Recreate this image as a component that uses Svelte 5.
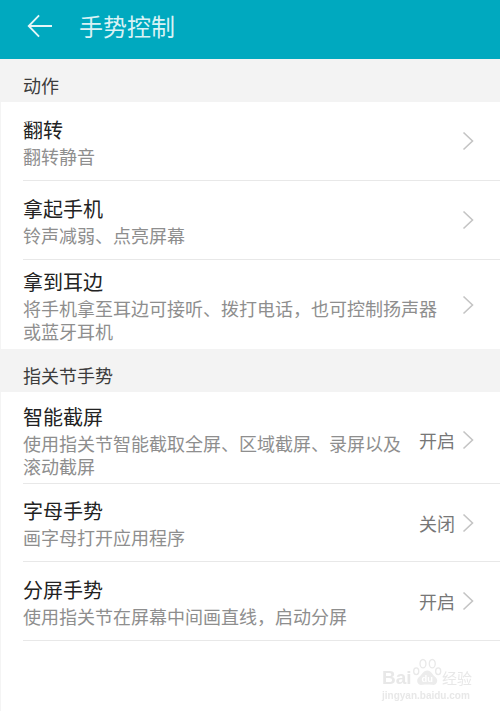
<script lang="ts">
  type Row = { title: string, desc: string, value?: string }

  const sections: { name: string, rows: Row[] }[] = [
    {
      name: '动作',
      rows: [
        { title: '翻转', desc: '翻转静音' },
        { title: '拿起手机', desc: '铃声减弱、点亮屏幕' },
        { title: '拿到耳边', desc: '将手机拿至耳边可接听、拨打电话，也可控制扬声器或蓝牙耳机' },
      ],
    },
    {
      name: '指关节手势',
      rows: [
        { title: '智能截屏', desc: '使用指关节智能截取全屏、区域截屏、录屏以及滚动截屏', value: '开启' },
        { title: '字母手势', desc: '画字母打开应用程序', value: '关闭' },
        { title: '分屏手势', desc: '使用指关节在屏幕中间画直线，启动分屏', value: '开启' },
      ],
    },
  ]
</script>

<div class="page">
  <header>
    <svg class="back" viewBox="0 0 28 26" width="26" height="24" aria-hidden="true">
      <path d="M13 1.5 1.8 13 13 24.5M2 13h25" fill="none" stroke="#e6f6f8" stroke-width="2"/>
    </svg>
    <h1>手势控制</h1>
  </header>

  {#each sections as section}
    <h2>{section.name}</h2>
    <ul class:lined={section.name !== '动作'}>
      {#each section.rows as row}
        <li>
          <div class="text">
            <div class="title">{row.title}</div>
            <div class="desc">{row.desc}</div>
          </div>
          {#if row.value}
            <span class="value">{row.value}</span>
          {/if}
          <svg class="chev" viewBox="0 0 12 20" width="12" height="20" aria-hidden="true">
            <path d="M1.5 1.5 10.5 10l-9 8.5" fill="none" stroke="#c4c4c4" stroke-width="1.6"/>
          </svg>
        </li>
      {/each}
    </ul>
  {/each}

  <div class="mark" aria-hidden="true">
    <div class="logo">
      <span class="bai">Bai</span>
      <svg viewBox="0 0 36 36" width="32" height="32">
        <g fill="none" stroke="#e9e9e9" stroke-width="1.6">
          <ellipse cx="5" cy="16" rx="3" ry="4"/>
          <ellipse cx="13" cy="7" rx="3.5" ry="5"/>
          <ellipse cx="24" cy="7" rx="3.5" ry="5"/>
          <ellipse cx="31" cy="16" rx="3" ry="4"/>
        </g>
        <path d="M18 15c-5 0-6 5-10 8-4 4-1 10 4 9 3-.6 9-.6 12 0 5 1 8-5 4-9-4-3-5-8-10-8z" fill="#ececec"/>
        <text x="18" y="29" text-anchor="middle" class="du">du</text>
      </svg>
      <span class="jy">经验</span>
    </div>
    <div class="url">jingyan.baidu.com</div>
  </div>
</div>

<style>
  :global(body) {
    margin: 0;
    background: #fff;
  }

  .page {
    position: relative;
    width: 500px;
    height: 711px;
    overflow: hidden;
    background: #fff;
    box-shadow: inset 1px 0 #f4f4f4;
    font-family: "Noto Sans CJK SC", "Noto Sans", sans-serif;
  }

  header {
    display: flex;
    align-items: center;
    gap: 26px;
    height: 59px;
    padding: 0 0 8px 27px;
    box-sizing: border-box;
    background: #00a9bf;
    color: #d9f2f5;
  }

  .back {
    flex: none;
  }

  h1 {
    margin: 0;
    font-size: 24px;
    font-weight: 400;
    line-height: 32px;
  }

  h2 {
    display: flex;
    align-items: center;
    height: 43px;
    margin: 0;
    padding: 9px 0 0 23px;
    box-sizing: border-box;
    background: #f3f3f3;
    color: #3c3c3c;
    font-size: 18px;
    font-weight: 400;
  }

  ul {
    margin: 0;
    padding: 0;
    list-style: none;
  }

  li {
    display: flex;
    align-items: center;
    box-sizing: border-box;
    min-height: 79px;
    margin-left: 23px;
    padding: 7px 26px 7px 0;
    border-bottom: 1px solid #e8e8e8;
  }

  ul:not(.lined) li:last-child {
    min-height: 0;
    border-bottom: 0;
  }

  .lined li:first-child {
    padding: 10px 26px 6px 0;
  }

  .lined li:nth-child(2) {
    min-height: 78px;
  }

  .text {
    flex: 1;
    min-width: 0;
    padding-right: 16px;
  }

  .title {
    color: #222;
    font-size: 20px;
    line-height: 30px;
  }

  .desc {
    color: #8e8e8e;
    font-size: 18px;
    line-height: 22.5px;
  }

  .lined .text {
    max-width: 385px;
    padding-right: 0;
  }

  li .value {
    margin-left: auto;
    color: #777;
    font-size: 18px;
    padding-right: 5px;
  }

  .chev {
    flex: none;
    margin-left: 2px;
  }

  .mark {
    position: absolute;
    right: 28px;
    bottom: 10px;
    width: 90px;
    color: #e8e8e8;
    filter: blur(0.5px);
  }

  .logo {
    display: flex;
    align-items: flex-end;
    font-family: "Liberation Sans", sans-serif;
    font-weight: 700;
  }

  .bai {
    font-size: 19px;
    line-height: 22px;
  }

  .jy {
    font-family: "Noto Sans CJK SC", sans-serif;
    font-size: 15px;
    line-height: 22px;
    font-weight: 400;
    white-space: nowrap;
  }

  .du {
    fill: #fff;
    font-size: 11px;
    font-weight: 700;
  }

  .url {
    font-family: "Liberation Sans", sans-serif;
    font-size: 10px;
    font-weight: 700;
    white-space: nowrap;
    margin-top: 1px;
  }
</style>
